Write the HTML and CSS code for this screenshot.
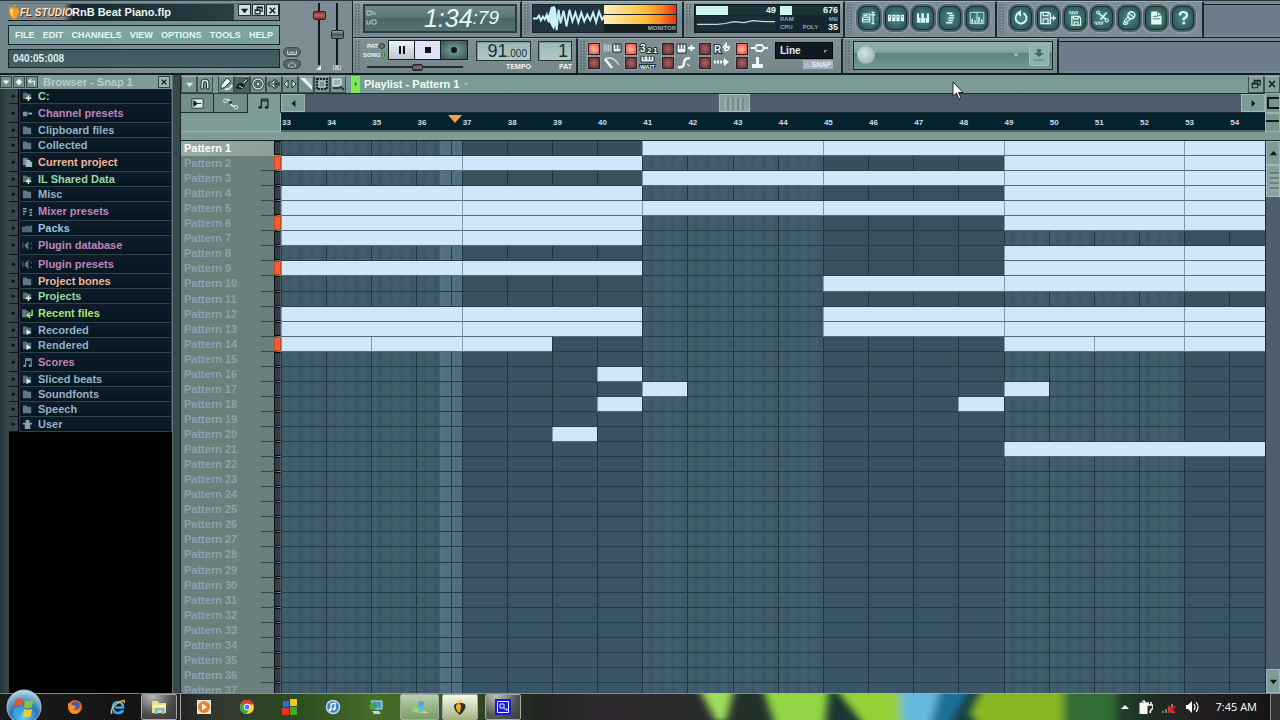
FILE: index.html
```html
<!DOCTYPE html>
<html lang="en">
<head>
<meta charset="utf-8">
<title>FL Studio - RnB Beat Piano.flp</title>
<link rel="stylesheet" href="styles.css">
</head>
<body>
<svg class="sprite" aria-hidden="true">
  <symbol id="fruit" viewBox="0 0 12 18"><path d="M1 6Q3 3 6 5Q10 4 11 8Q11 13 6 17Q1 13 1 6Z" fill="#ff9a1e"/><path d="M2 7Q3 5 5 6Q4 10 5 14Q2 11 2 7Z" fill="#ffe070"/><path d="M5 5Q5 1 9 1Q8 3 6 5Z" fill="#6fc23b"/></symbol>
  <symbol id="down" viewBox="0 0 10 10"><path d="M1 3h8L5 8Z" fill="currentColor"/></symbol>
  <symbol id="up" viewBox="0 0 10 10"><path d="M1 7h8L5 2Z" fill="currentColor"/></symbol>
  <symbol id="left" viewBox="0 0 10 10"><path d="M7 1v8L3 5Z" fill="currentColor"/></symbol>
  <symbol id="right" viewBox="0 0 10 10"><path d="M3 1v8L7 5Z" fill="currentColor"/></symbol>
  <symbol id="marker" viewBox="0 0 14 8"><path d="M0 0h14L7 8Z" fill="currentColor"/></symbol>
  <symbol id="restore" viewBox="0 0 12 12"><path d="M4 4V1.500h7V7H8M1.500 5H8v5.500H1.500ZM1.500 6H8M4 2.500h7" fill="none" stroke="currentColor" stroke-width="1.400"/></symbol>
  <symbol id="close" viewBox="0 0 10 10"><path d="M2 2l6 6M8 2L2 8" stroke="currentColor" stroke-width="1.600"/></symbol>
  <symbol id="folder" viewBox="0 0 12 12"><path d="M1 3V1.500h4L6 3h4v7H1Z" fill="#607783"/></symbol>
  <symbol id="folderplus" viewBox="0 0 12 12"><path d="M1 3V1.500h4L6 3h4v6H1Z" fill="#566d72"/><path d="M7 5v6M4 8h6" stroke="#d8f2e2" stroke-width="1.600"/></symbol>
  <symbol id="folderplay" viewBox="0 0 12 12"><path d="M1 3V1.500h4L6 3h4v7H1Z" fill="#566d77"/><path d="M5 5l5 3-5 3Z" fill="#e6f4fa"/></symbol>
  <symbol id="folderrecent" viewBox="0 0 12 12"><path d="M0 3V1.500h4L5 3h2v7H0Z" fill="#607783"/><path d="M11 2v6H7M9 5L6 8l3 3" fill="none" stroke="#b5ec6b" stroke-width="1.500"/></symbol>
  <symbol id="channel" viewBox="0 0 12 12"><path d="M1 4h5v5H1Z" fill="#7b8f9c"/><path d="M7 5h4v2H7Z" fill="#a7b8c2"/></symbol>
  <symbol id="pages" viewBox="0 0 12 12"><path d="M1 1h5v8H1Z" fill="#708692"/><path d="M4 3h4l3 3v5H4Z" fill="#a3b7c0"/></symbol>
  <symbol id="mixer" viewBox="0 0 12 12"><path d="M1 3h4M1 6h4M1 9h2M8 4h3M8 7h3M8 10h3" stroke="#8fa2ad" stroke-width="1.600"/></symbol>
  <symbol id="packs" viewBox="0 0 12 12"><path d="M0 4h3l1-1h3v1l4-2v8H0Z" fill="#526874"/></symbol>
  <symbol id="plug" viewBox="0 0 12 12"><path d="M7 1v10L3 7V5Z" fill="#60737d"/><path d="M1 3v6M10 3v2M10 8v2" stroke="#60737d"/></symbol>
  <symbol id="note" viewBox="0 0 12 12"><path d="M4 9V2h6v7M4 3.500h6" fill="none" stroke="currentColor" stroke-width="1.200"/><ellipse cx="3" cy="9.500" rx="1.800" ry="1.400" fill="currentColor"/><ellipse cx="9" cy="9.500" rx="1.800" ry="1.400" fill="currentColor"/></symbol>
  <symbol id="user" viewBox="0 0 12 12"><path d="M4 1h4v3h3v2H9v5H3V6H1V4h3Z" fill="#8ba0a8"/></symbol>
  <symbol id="t-playlist" viewBox="0 0 20 20"><path d="M2 5h9v10H2V9h9M2 12h9M3 7h5" fill="none" stroke="currentColor" stroke-width="1.400"/><path d="M15 3v14M12 6h6M13 3h4M13 17h4" fill="none" stroke="currentColor" stroke-width="1.600"/></symbol>
  <symbol id="t-step" viewBox="0 0 20 20"><path d="M0 6h4v8H0ZM5.300 6h4v8h-4ZM10.600 6h4v8h-4ZM16 6h4v8h-4Z" fill="currentColor"/><path d="M1.500 8.500h1M6.800 8.500h1M12 8.500h1M17.500 8.500h1" stroke="#2d5a5b" stroke-width="2"/></symbol>
  <symbol id="t-piano" viewBox="0 0 20 20"><path d="M2.500 4h2.500v6h2v6H2.500ZM8 10V4h1v0h2v6h1.500v6H7.800v-6ZM15 4h2.500v12h-4.200v-6H15Z" fill="currentColor"/></symbol>
  <symbol id="t-browser" viewBox="0 0 20 20"><path d="M6 4h7M9 7h6M8 10h7M8 13h6M5 16h8" stroke="currentColor" stroke-width="1.900"/></symbol>
  <symbol id="t-mixer" viewBox="0 0 20 20"><path d="M1.500 3h17v14h-17ZM10 3v14" fill="none" stroke="currentColor"/><path d="M4 16v-5M7.500 16v-3M12.500 16V9M16 16v-4" stroke="currentColor" stroke-width="2"/></symbol>
  <symbol id="t-undo" viewBox="0 0 20 20"><path d="M5.500 5A6.800 6.800 0 1 0 13 4" fill="none" stroke="currentColor" stroke-width="2.300"/><path d="M10 0v8L4 4Z" fill="currentColor"/></symbol>
  <symbol id="t-save" viewBox="0 0 20 20"><path d="M1 3h10l2 2v12H1ZM4 3v4h6V3M4 17v-6h6v6M14 10h6M17 7v6" fill="none" stroke="currentColor" stroke-width="1.600"/></symbol>
  <symbol id="t-render" viewBox="0 0 20 20"><path d="M3 5V2h2v3h2V2h2v3h2V2h2v3" fill="none" stroke="currentColor"/><path d="M6 8h9l2 2v9H6ZM8 8v3h6V8M9 19v-4h5v4" fill="none" stroke="currentColor" stroke-width="1.500"/></symbol>
  <symbol id="t-cut" viewBox="0 0 20 20"><path d="M6 4l9 8M16 3L8 12" fill="none" stroke="currentColor" stroke-width="1.900"/><path d="M1 18v-3h2v3h2v-3h2v3h2v-3h2v3" fill="none" stroke="currentColor"/><circle cx="5" cy="3" r="1.800" fill="none" stroke="currentColor" stroke-width="1.300"/><circle cx="16" cy="13" r="2" fill="none" stroke="currentColor" stroke-width="1.400"/></symbol>
  <symbol id="t-mic" viewBox="0 0 20 20"><circle cx="13" cy="6.500" r="4.300" fill="none" stroke="currentColor" stroke-width="1.800"/><path d="M9 8l-5 6 2 2 6-5M4 15q-2 3 1 3t4-2M10 4l6 5" fill="none" stroke="currentColor" stroke-width="1.500"/></symbol>
  <symbol id="t-doc" viewBox="0 0 20 20"><path d="M4 2h8l5 5v11H4Z" fill="currentColor"/><path d="M6 8h6M6 11h9M12 2v5h5" stroke="#37696a" fill="none"/></symbol>
  <symbol id="t-help" viewBox="0 0 20 20"><path d="M6 7q0-4.500 4.500-4.500T15 6q0 3-4 5v2" fill="none" stroke="currentColor" stroke-width="2.800"/><circle cx="11" cy="16.500" r="1.700" fill="currentColor"/></symbol>
  <symbol id="magnet" viewBox="0 0 14 14"><path d="M3 12V6Q3 2 7 2t4 4v6H8.500V6.500Q8.500 4.500 7 4.500T5.500 6.500V12Z" fill="#dcebec" stroke="#1e2d31"/></symbol>
  <symbol id="pencil" viewBox="0 0 14 14"><path d="M2 8L8 1l4 3-6 6-4 2Z" fill="#eef8f8" stroke="#1e2d31"/><path d="M6 12q5 1 7-4" fill="none" stroke="#dfeeee" stroke-width="2"/></symbol>
  <symbol id="brush" viewBox="0 0 14 14"><path d="M8 5l4-4 1 2-4 4" fill="#b4c5c5" stroke="#111"/><path d="M2 8q3-4 7-1 2 3-2 5-4 1-6-1Z" fill="#1b2427"/><path d="M4 9l4 2" stroke="#c8d6d6"/></symbol>
  <symbol id="circle" viewBox="0 0 14 14"><circle cx="7" cy="7" r="5" fill="none" stroke="#1e2d31" stroke-width="3"/><circle cx="7" cy="7" r="5" fill="none" stroke="#dcebec" stroke-width="1.300"/><circle cx="7" cy="7" r="2" fill="#dcebec" stroke="#1e2d31"/></symbol>
  <symbol id="mute" viewBox="0 0 14 14"><path d="M2 5h3l3-3v10L5 9H2Z" fill="#c8d8da" stroke="#1e2d31"/><path d="M10 3v8M12 5v4M1 7h12" stroke="#1e2d31"/></symbol>
  <symbol id="slip" viewBox="0 0 14 14"><path d="M5 3v8L1 7ZM9 3v8l4-4Z" fill="#dcebec" stroke="#1e2d31"/></symbol>
  <symbol id="slice" viewBox="0 0 14 14"><path d="M1 1h5l7 8v4Z" fill="#e4f3f2"/><path d="M6 1h7v8Z" fill="#9db8b3"/></symbol>
  <symbol id="marquee" viewBox="0 0 14 14"><path d="M2 2h10v10H2Z" fill="none" stroke="#17262a" stroke-width="2.200" stroke-dasharray="2 1"/><path d="M4 4h6v6H4Z" fill="none" stroke="#c6d9d9"/></symbol>
  <symbol id="zoomer" viewBox="0 0 14 14"><path d="M2 2h8v7H2Z" fill="#a0b4b5" stroke="#e9f5f5"/><path d="M9 9l4 4M2 11h7" stroke="#18272b" stroke-width="1.700"/></symbol>
  <symbol id="tab-clip" viewBox="0 0 16 14"><path d="M2 2h12v10H2Z" fill="#dceaea" stroke="#26363a"/><path d="M4 4v6l4-3ZM8 7h4" fill="#132227" stroke="#132227"/></symbol>
  <symbol id="tab-auto" viewBox="0 0 18 14"><path d="M3 4q5-3 6 2t6 4" fill="none" stroke="#e0eeee" stroke-width="1.500"/><circle cx="3.500" cy="4" r="2" fill="#78928f" stroke="#e0eeee"/><circle cx="9" cy="6" r="1.600" fill="#223135"/><circle cx="15" cy="11" r="2" fill="#78928f" stroke="#e0eeee"/></symbol>
</svg>

<header class="top">
  <section class="ident">
    <div class="ident-main">
      <div class="titlebar">
        <svg class="fruit"><use href="#fruit"/></svg>
        <span class="brand">FL STUDIO</span>
        <span class="song">RnB Beat Piano.flp</span>
        <div class="winbtns">
          <button aria-label="Minimize"><svg><use href="#down"/></svg></button>
          <button aria-label="Restore"><svg><use href="#restore"/></svg></button>
          <button aria-label="Close"><svg><use href="#close"/></svg></button>
        </div>
      </div>
      <nav class="menu"><button>FILE</button><button>EDIT</button><button>CHANNELS</button><button>VIEW</button><button>OPTIONS</button><button>TOOLS</button><button>HELP</button></nav>
      <div class="hint">040:05:008</div>
    </div>
    <div class="pills">
      <button aria-label="Typing keyboard"><svg viewBox="0 0 18 8"><path d="M4 2v4h10V2M7 5V3M9 5V3M11 5V3" fill="none" stroke="#e3edf0"/></svg></button>
      <button aria-label="Multilink"><svg viewBox="0 0 18 8"><path d="M5 7Q5 2 9 2t4 5M7 7h4" fill="none" stroke="#c9d6da"/></svg></button>
    </div>
    <div class="faders">
      <label><input class="fader red" type="range" min="0" max="100" value="84" aria-label="Main volume"><svg viewBox="0 0 8 5"><path d="M1 5L6 0v5Z" fill="#eef"/></svg></label>
      <label><input class="fader" type="range" min="0" max="100" value="49" aria-label="Main pitch"><svg viewBox="0 0 8 5"><path d="M0 0v5h8V0M3 0v4M5 0v4" fill="none" stroke="#eef"/></svg></label>
    </div>
  </section>

  <div class="panels">
    <div class="prow">
      <section class="panel p-time"><i class="grip"></i>
        <div class="clock"><svg class="clockmode" viewBox="0 0 12 18"><path d="M2 2h4v4H2ZM8 2v4M10 3v3M2 11v4h3v-4M7 11h4v4H7Z" fill="none" stroke="#b7cbcb"/></svg><span class="big">1:34</span><span class="small">:79</span></div>
      </section>
      <section class="panel p-scope"><i class="grip"></i>
        <div class="scope">
          <svg class="wave" viewBox="0 0 72 28" preserveAspectRatio="none"><path d="M0 14h4l2-3 2 5 2-4 2 3 2-5 2 8 2-11 2 15 2-19 2 23 2-21 2 14 3-13 3 16 3-17 3 12 3-9 3 10 3-10 3 9 3-7 3 6 3-8 3 10 3-11 3 8 2-3 1 4" fill="none" stroke="#c7f2f5" stroke-width="2"/><path d="M12 13l4-3 2-8 4-1 2 8v9l-3 8-5-10Z" fill="#c7f2f5"/></svg>
          <div class="meter"><i></i><i></i><span>MONITOR</span></div>
        </div>
      </section>
      <section class="panel p-cpu"><i class="grip"></i>
        <div class="cpu">
          <div class="cpu-l"><div class="gauge"><i class="w32"></i><b>49</b></div><svg viewBox="0 0 80 16" preserveAspectRatio="none"><path d="M1 9h20l8-1 9-2 10 1 9-2 12 1h10" fill="none" stroke="#c3dcdc" stroke-width="1.300"/></svg></div>
          <div class="cpu-r"><div class="gauge"><i class="w12"></i><b>676</b></div><div class="tiny"><span>RAM</span><span>MB</span></div><div class="tiny"><span>CPU</span><span>POLY</span><b>35</b></div></div>
        </div>
      </section>
      <section class="panel p-icons"><i class="grip"></i>
        <button aria-label="Playlist"><svg><use href="#t-playlist"/></svg></button><button aria-label="Step sequencer"><svg><use href="#t-step"/></svg></button><button aria-label="Piano roll"><svg><use href="#t-piano"/></svg></button><button aria-label="Browser"><svg><use href="#t-browser"/></svg></button><button aria-label="Mixer"><svg><use href="#t-mixer"/></svg></button>
      </section>
      <section class="panel p-icons wide"><i class="grip"></i>
        <button aria-label="Undo"><svg><use href="#t-undo"/></svg></button><button aria-label="Save new version"><svg><use href="#t-save"/></svg></button><button aria-label="Render"><svg><use href="#t-render"/></svg></button><button aria-label="Edit sample"><svg><use href="#t-cut"/></svg></button><button aria-label="Record"><svg><use href="#t-mic"/></svg></button><button aria-label="Project info"><svg><use href="#t-doc"/></svg></button><button aria-label="Help"><svg><use href="#t-help"/></svg></button>
      </section>
      <div class="filler"></div>
    </div>
    <div class="prow">
      <section class="panel p-transport"><i class="grip"></i>
        <div class="transport">
          <div class="tline">
            <div class="modes"><label>PAT<input type="radio" name="mode"></label><label>SONG<input type="radio" name="mode" checked></label></div>
            <div class="tbtns">
              <button aria-label="Pause"><svg viewBox="0 0 12 12"><path d="M3 2h2v8H3ZM7 2h2v8H7Z" fill="#0d1518"/></svg></button><button class="on" aria-label="Stop"><svg viewBox="0 0 12 12"><path d="M3 3h6v6H3Z" fill="#0d1518"/></svg></button><button class="rec" aria-label="Record"><svg viewBox="0 0 12 12"><circle cx="6" cy="6" r="3" fill="#0d1518"/></svg></button>
            </div>
          </div>
          <input class="songpos" type="range" min="0" max="100" value="53" aria-label="Song position">
        </div>
        <div class="lcdbox tempo"><output>91<small>.000</small></output><span>TEMPO</span></div>
        <div class="lcdbox pat"><output>1</output><span>PAT</span></div>
      </section>
      <section class="panel p-toggles"><i class="grip"></i>
        <div class="toggles">
          <label><input type="checkbox" checked aria-label="Typing keyboard to piano"><svg viewBox="0 0 20 13"><path d="M1 2h9v8H1Z" fill="#93a0a6"/><path d="M2 4h7M2 6h7M2 8h7" stroke="#e8f3f5" stroke-dasharray="1 1"/><path d="M11 2h8v8h-8ZM14 2v5M17 2v5" fill="#eef7f8" stroke="#1b2a2e"/></svg></label>
          <label><input type="checkbox" checked aria-label="Countdown"><svg viewBox="0 0 20 13"><text x="1" y="10" class="glyph">3</text><text x="8" y="11" class="glyph s">2</text><text x="14" y="11" class="glyph s">1</text></svg></label>
          <label><input type="checkbox" aria-label="Blend recording"><svg viewBox="0 0 20 13"><path d="M1 2h9v9H1ZM4 2v5M7 2v5" fill="#eef7f8" stroke="#1b2a2e"/><path d="M12 6h7M15.500 3v6" stroke="#eef7f8" stroke-width="2"/></svg></label>
          <label><input type="checkbox" aria-label="Loop recording"><svg viewBox="0 0 20 13"><text x="1" y="11" class="glyph">R</text><path d="M12 9q5-1 4-5M10 6l3-4v3h4M12 6v3" fill="none" stroke="#eef7f8" stroke-width="1.800"/></svg></label>
          <label><input type="checkbox" checked aria-label="Link to last parameter"><svg viewBox="0 0 20 13"><path d="M1 6h4M14 6h4M7 3h5l2 3-2 3H7L5 6Z" fill="none" stroke="#eef7f8" stroke-width="1.800"/></svg></label>
          <label><input type="checkbox" aria-label="Metronome"><svg viewBox="0 0 20 13"><path d="M3 3q8-4 14 6" fill="none" stroke="#c9d7da" stroke-width="1.500"/><path d="M3 3l7 9" stroke="#eef7f8" stroke-width="2.500"/></svg></label>
          <label><input type="checkbox" aria-label="Wait for input"><svg viewBox="0 0 20 13"><path d="M2 0h13v6H2ZM5 0v4M9 0v4M12 0v4" fill="#eef7f8" stroke="#1b2a2e"/><text x="1" y="13" class="glyph xs">WAIT</text></svg></label>
          <label><input type="checkbox" aria-label="Step editing"><svg viewBox="0 0 20 13"><path d="M2 11q6 1 6-4t6-5" fill="none" stroke="#eef7f8" stroke-width="2.500"/><path d="M11 8l3 2" stroke="#eef7f8"/></svg></label>
          <label><input type="checkbox" aria-label="Auto-scroll"><svg viewBox="0 0 20 13"><path d="M1 6h10" stroke="#eef7f8" stroke-width="3" stroke-dasharray="2 1"/><path d="M11 2l5 4-5 4Z" fill="#eef7f8"/></svg></label>
          <label><input type="checkbox" aria-label="MIDI activity"><svg viewBox="0 0 20 13"><path d="M2 8h11v4H2ZM6 1h3v7H6Z" fill="#eef7f8"/></svg></label>
        </div>
        <div class="snap"><select aria-label="Snap"><option>Line</option></select><span>∩ SNAP</span></div>
      </section>
      <section class="panel p-news"><i class="grip"></i>
        <div class="news"><i class="bulb"></i><svg class="arr"><use href="#down"/></svg><button aria-label="Download"><svg viewBox="0 0 14 14"><path d="M5 1h4v4h3L7 9 2 5h3Z" fill="#456b6b"/><path d="M2 12h10" stroke="#5d8483"/></svg></button></div>
      </section>
      <div class="filler"></div>
    </div>
  </div>
</header>

<main class="work">
  <aside class="browser">
    <div class="bhead">
      <button aria-label="Options"><svg><use href="#down"/></svg></button>
      <button aria-label="Collapse"><svg viewBox="0 0 10 10"><path d="M5 1l4 4-4 4-4-4Z" fill="#f2fbfa"/></svg></button>
      <button aria-label="Refresh"><svg viewBox="0 0 10 10"><path d="M1 4h7v5M4 1L1 4l3 3" fill="none" stroke="#f2fbfa" stroke-width="1.400"/></svg></button>
      <h2>Browser - Snap 1</h2>
      <button class="x" aria-label="Close browser"><svg><use href="#close"/></svg></button>
    </div>
    <ul class="tree" id="tree"></ul>
  </aside>

  <section class="playlist">
    <div class="phead">
      <div class="tools"><button aria-label="Menu"><svg class="tri"><use href="#down"/></svg></button><button aria-label="Snap"><svg><use href="#magnet"/></svg></button></div>
      <div class="tools"><button aria-label="Draw"><svg><use href="#pencil"/></svg></button><button class="down" aria-label="Paint"><svg><use href="#brush"/></svg></button><button aria-label="Delete"><svg><use href="#circle"/></svg></button><button aria-label="Mute"><svg><use href="#mute"/></svg></button><button aria-label="Slip"><svg><use href="#slip"/></svg></button><button aria-label="Slice"><svg><use href="#slice"/></svg></button><button aria-label="Select"><svg><use href="#marquee"/></svg></button><button aria-label="Zoom"><svg><use href="#zoomer"/></svg></button></div>
      <i class="flag"><svg><use href="#right"/></svg></i>
      <h1>Playlist - Pattern 1</h1><svg class="caret"><use href="#down"/></svg>
      <div class="tools end"><button aria-label="Restore playlist"><svg><use href="#restore"/></svg></button><button aria-label="Close playlist"><svg><use href="#close"/></svg></button></div>
    </div>
    <div class="pgrid">
      <div class="tabs"><button aria-label="Clips"><svg><use href="#tab-clip"/></svg></button><button aria-label="Automation"><svg><use href="#tab-auto"/></svg></button><button class="sel" aria-label="Patterns"><svg><use href="#note"/></svg></button></div>
      <div class="hscroll"><button aria-label="Scroll left"><svg><use href="#left"/></svg></button><div class="track"><i class="thumb"></i></div><button aria-label="Scroll right"><svg><use href="#right"/></svg></button></div>
      <button class="corner box" aria-label="Zoom out"></button>
      <div class="under-tabs"></div>
      <div class="ruler bars" id="ruler"></div>
      <button class="corner line" aria-label="Zoom in"></button>
      <div class="strip"></div>
      <div class="names"><ol id="names"></ol></div>
      <div class="lanes"><div class="stack"><div class="layer bars" id="cols"></div><div class="layer bars"><i class="playzone"></i></div><div class="layer rows" id="rows"></div></div></div>
      <div class="vscroll"><button aria-label="Scroll up"><svg><use href="#up"/></svg></button><i class="vthumb"></i><button class="bottom" aria-label="Scroll down"><svg><use href="#down"/></svg></button></div>
    </div>
  </section>
</main>

<footer class="taskbar">
  <svg class="wall" viewBox="0 0 1280 27" preserveAspectRatio="none" aria-hidden="true">
    <defs><filter id="soft"><feGaussianBlur stdDeviation="4 2"/></filter>
    <linearGradient id="wl"><stop offset="0" stop-color="#171b1a"/><stop offset=".12" stop-color="#161216"/><stop offset=".17" stop-color="#33382f"/><stop offset=".23" stop-color="#2c4a22"/><stop offset=".29" stop-color="#456d28"/><stop offset=".34" stop-color="#3c5d25"/><stop offset=".42" stop-color="#20251f"/><stop offset=".47" stop-color="#302a30"/><stop offset=".53" stop-color="#2b2b2c"/><stop offset=".62" stop-color="#1e3428"/><stop offset=".74" stop-color="#143b46"/><stop offset=".84" stop-color="#2c5a33"/><stop offset=".9" stop-color="#1d2c21"/><stop offset=".94" stop-color="#221e22"/><stop offset="1" stop-color="#121315"/></linearGradient></defs>
    <rect width="1280" height="27" fill="url(#wl)"/>
    <g filter="url(#soft)"><path d="M699-4h35l-8 32h-10Z" fill="#9ede5c"/><path d="M763-4h66l-4 36h-50Z" fill="#92d545"/><path d="M836-4h66v36h-38Z" fill="#96d038"/><path d="M900-4h42l-12 36h-28Z" fill="#66b9dd"/><path d="M940-4h30l-20 36h-20Z" fill="#1b6f94"/><path d="M982-4h82v36h-86l-8-12Z" fill="#88b624"/><path d="M1066-4h50v36h-50Z" fill="#336d35"/></g>
    <path d="M0 .500h1280" stroke="#a9b3b0" opacity=".7"/>
  </svg>
  <div class="apps">
    <button class="orb" aria-label="Start"><svg viewBox="0 0 36 36"><defs><radialGradient id="og" cx=".5" cy=".8" r=".8"><stop offset="0" stop-color="#5fd6f5"/><stop offset=".5" stop-color="#2a78b5"/><stop offset="1" stop-color="#bfe0ef"/></radialGradient></defs><circle cx="18" cy="18" r="17" fill="url(#og)" stroke="#9fc3d6"/><path d="M9 11q4-3 8-1l-1 7q-4-2-8 1Z" fill="#ee5527"/><path d="M19 11q4 2 8 0l-1 7q-4 2-8 0Z" fill="#8cc63f"/><path d="M8 20q4-3 8-1l-1 7q-4-2-8 1Z" fill="#3ba0e6"/><path d="M18 20q4 2 8 0l-1 7q-4 2-8 0Z" fill="#fcc92c"/></svg></button>
    <button aria-label="Firefox"><svg viewBox="0 0 16 16"><circle cx="8" cy="8" r="7" fill="#e8641b"/><circle cx="8.500" cy="6.500" r="4" fill="#3b5fa8"/><path d="M1 4q2 0 4 2 3 0 4 2-1 3-4 2 3 3 8-1 0 6-6 6T1 4Z" fill="#f98d22"/></svg></button>
    <button aria-label="Internet Explorer"><svg viewBox="0 0 16 16"><path d="M13 11q-1 3-5 3-5 0-5-5.500T8 3q5 0 5 5.500H5" fill="none" stroke="#3fa5ea" stroke-width="2.500"/><path d="M2 15Q-1 10 8 4q8-5 6 0" fill="none" stroke="#f2c73a" stroke-width="1.300"/></svg></button>
    <button class="open" aria-label="Explorer"><svg viewBox="0 0 16 16"><path d="M1 2h6l1 2h7v10H1Z" fill="#f6dd7f"/><path d="M2 6h12v3H2Z" fill="#fff4bf"/><path d="M5 15v-5h7v5" fill="none" stroke="#6cbbe0" stroke-width="2.500"/></svg></button>
    <i class="sep"></i>
    <button class="first" aria-label="Media Player"><svg viewBox="0 0 16 16"><path d="M1 1h14v14H1Z" fill="#dbe7ee"/><circle cx="8" cy="8" r="6" fill="#f4811f"/><path d="M6 4.500v7l5-3.500Z" fill="#fff"/></svg></button>
    <button aria-label="Chrome"><svg viewBox="0 0 16 16"><circle cx="8" cy="8" r="7" fill="#ffd23d"/><path d="M8 8L2 4.500A7 7 0 0 1 14.500 5.500H8Z" fill="#e23a2c"/><path d="M8 8L2 4.500A7 7 0 0 0 7.500 15L11 9Z" fill="#3aa755"/><circle cx="8" cy="8" r="3" fill="#4285f4" stroke="#fff"/></svg></button>
    <button aria-label="Windows Live"><svg viewBox="0 0 16 16"><path d="M1 2h6v6H1Z" fill="#2d6fe0"/><path d="M8 0h7v7H8Z" fill="#f4c51f"/><path d="M0 9h7v7H0Z" fill="#e33524"/><path d="M8 8h7v8H8Z" fill="#49a62b"/></svg></button>
    <button aria-label="iTunes"><svg viewBox="0 0 16 16"><circle cx="8" cy="8" r="6.500" fill="#3b7fc0" stroke="#b9daf1" stroke-width="1.500"/><path d="M6 11V5l4-1v6" fill="none" stroke="#fff" stroke-width="1.300"/><circle cx="5" cy="11" r="1.400" fill="#fff"/><circle cx="9" cy="10" r="1.400" fill="#fff"/></svg></button>
    <button aria-label="Network"><svg viewBox="0 0 16 16"><path d="M3 2h11v8H6Z" fill="#3f9cc9" stroke="#bfe1ee"/><circle cx="5" cy="7" r="3.500" fill="#4aa04c"/><path d="M4 12h7l2 3H6Z" fill="#b7d9ea"/></svg></button>
    <button class="open g" aria-label="Messenger"><svg viewBox="0 0 16 16"><circle cx="9" cy="5" r="3" fill="#57a9d9"/><path d="M3 14q1-7 6-6t6 6Z" fill="#5fbce2"/><path d="M0 13q1-6 5-4l4 5Z" fill="#9bd364"/><path d="M9 14q3-4 7 0Z" fill="#f2d045"/></svg></button>
    <button class="open w" aria-label="FL Studio"><svg viewBox="0 0 16 16"><path d="M2 6q4-4 11-1 2 5-5 11Q2 12 2 6Z" fill="#24302a"/><path d="M4 6q3-2 5 0 0 6-2 8-4-4-3-8Z" fill="#ffa726"/><path d="M5 4q1-4 5-3Q9 4 6 5Z" fill="#ffd44d"/></svg></button>
    <button class="open" aria-label="Recorder"><svg viewBox="0 0 16 16"><path d="M0 0h16v16H0Z" fill="#1718d8"/><path d="M2.500 2.500h11v11h-11ZM5 5h4v4H5ZM9 10h3v2" fill="none" stroke="#e8ecff"/></svg></button>
  </div>
  <div class="tray">
    <svg viewBox="0 0 10 10" class="s"><path d="M1 7h8L5 3Z" fill="#fff"/></svg>
    <svg viewBox="0 0 14 14"><path d="M1 3h7v11H1ZM3 1h3v2" fill="#f6f6f6" stroke="#f6f6f6"/><path d="M9 2v3M12 2v3M8 5h6v3q-3 2-3 5" fill="none" stroke="#fff" stroke-width="1.500"/></svg>
    <svg viewBox="0 0 14 14"><path d="M1 13v-2M4 13V9M7 13V7M10 13V4" stroke="#999" stroke-width="1.500"/><path d="M6 6l7 7M13 6l-7 7" stroke="#e8141a" stroke-width="2.200"/></svg>
    <svg viewBox="0 0 14 14"><path d="M1 5h2l4-4v12L3 9H1Z" fill="#fff"/><path d="M9 4q2 3 0 6M11 2q4 5 0 10" fill="none" stroke="#fff" stroke-width="1.200"/></svg>
    <time>7:45 AM</time>
    <button class="peek" aria-label="Show desktop"></button>
  </div>
</footer>

<svg class="cursor" viewBox="0 0 12 19" aria-hidden="true"><path d="M1 1v14l3.500-3 2.500 6 2-1-2.500-5.500H11Z" fill="#fff" stroke="#222"/></svg>
<script src="app.js"></script>
</body>
</html>
```
FILE: styles.css
```css
* { box-sizing: border-box; }
:root { --edge: #16242a; --teal: #7d9c98; --steel: #7b8b91; }
body { margin: 0; height: 100vh; display: flex; flex-direction: column; overflow: hidden; background: #000; font-family: "Liberation Sans", Arial, sans-serif; font-size: 11px; font-weight: bold; color: #dfeef0; }
button, input, select { margin: 0; padding: 0; border: 0; font: inherit; color: inherit; background: none; }
button { display: flex; align-items: center; justify-content: center; flex: none; }
h1, h2, ul, ol { margin: 0; padding: 0; list-style: none; font-size: 11px; }
svg { display: block; flex: none; }
.sprite { position: absolute; width: 0; height: 0; }
i { font-style: normal; }

/* top bar */
.top { display: flex; flex: none; height: 75px; background: linear-gradient(#8c9ca1, #74848a 30%, #7f9095 60%, #75868b); border-bottom: 2px solid #131e24; border-top: 1px solid #2a3a40; }
.ident { display: flex; flex: none; width: 352px; padding: 2px 0 0 8px; background: linear-gradient(90deg, #72858a, #7d9296 60%, #7d8b93); }
.ident-main { width: 272px; display: flex; flex-direction: column; gap: 4px; }
.titlebar { display: flex; align-items: center; height: 18px; background: linear-gradient(90deg, #76898e 56px, #14272e 64px, #30474c); border: 1px solid var(--edge); border-left: 0; border-top-color: #5f7278; }
.fruit { width: 12px; height: 18px; }
.brand { width: 52px; flex: none; font-style: italic; font-size: 10px; color: #fbe3bd; text-shadow: 1px 1px 0 #5b2d12; white-space: nowrap; }
.song { flex: 1; color: #e9f6f8; white-space: nowrap; }
.winbtns { display: flex; align-self: stretch; padding-left: 4px; background: #74868b; gap: 1px; align-items: flex-start; }
.winbtns button { width: 13px; height: 12px; background: #d5dee8; border: 1px solid #223136; color: #101a1e; }
.winbtns svg { width: 9px; height: 9px; }
.menu { display: flex; align-items: center; justify-content: space-between; height: 20px; padding: 0 6px; border: 1px solid var(--edge); background: linear-gradient(#7fa5a4, #7aa09f); font-size: 9px; color: #e4f8f7; }
.hint { height: 19px; line-height: 18px; padding: 0 4px; border: 1px solid var(--edge); background: linear-gradient(#42595e, #456166); color: #d9eeee; font-size: 10px; }
.pills { display: flex; flex-direction: column; justify-content: flex-end; gap: 2px; padding: 0 0 4px 3px; }
.pills button { width: 18px; height: 10px; border-radius: 5px; background: #59676f; border: 1px solid #3c494f; }
.pills svg { width: 16px; height: 7px; }
.faders { display: flex; margin-left: 10px; gap: 2px; }
.faders label { width: 16px; display: flex; flex-direction: column; align-items: center; }
.faders svg { width: 8px; height: 5px; }
.fader { appearance: none; writing-mode: vertical-lr; direction: rtl; width: 14px; height: 62px; background: linear-gradient(90deg, transparent 6px, #10181b 6px, #10181b 8px, transparent 8px); }
.fader::-webkit-slider-thumb { appearance: none; width: 13px; height: 9px; border: 1px solid #20282c; border-radius: 2px; background: linear-gradient(#a0a8ae, #4a545b 50%, #7a858c); }
.fader.red::-webkit-slider-thumb { background: linear-gradient(#7d3b3d, #d9555a 50%, #6e3436); }

.panels { flex: 1; min-width: 0; display: flex; flex-direction: column; border-left: 1px solid var(--edge); }
.prow { display: flex; flex: 1; min-height: 0; }
.prow + .prow { border-top: 1px solid var(--edge); }
.panel { display: flex; flex: none; align-items: center; border-right: 2px solid #1b292e; border-top: 1px solid #a2b0b4; }
.grip { align-self: stretch; width: 6px; margin: 2px 2px; background: radial-gradient(circle at 1px 1px, #65757b 1px, transparent 1px) 0 0 / 3px 3px; flex: none; }
.filler { flex: 1; background: repeating-linear-gradient(#6d7c8a 0, #6d7c8a 6px, #738290 7px, #6a7987 8px); border-top: 3px solid #78888e; box-shadow: inset 0 1px #10191d; border-bottom: 2px solid #78888e; }
.p-time { width: 169px; }
.clock { display: flex; align-items: center; justify-content: flex-end; width: 154px; height: 29px; margin-bottom: 2px; padding-right: 16px; border: 2px solid #2b3d41; background: linear-gradient(#6f8888, #5a7475 45%, #4a6668 50%, #57706f); color: #e5fafa; font-style: italic; font-weight: normal; }
.clockmode { width: 12px; height: 20px; margin-right: auto; }
.big { font-size: 25px; line-height: 28px; }
.small { font-size: 19px; line-height: 28px; }
.p-scope { width: 162px; }
.scope { display: flex; width: 145px; height: 29px; margin-bottom: 2px; border: 1px solid #1a262b; background: #233440; }
.wave { width: 71px; height: 27px; }
.meter { flex: 1; display: flex; flex-direction: column; gap: 1px; background: #181d1d; }
.meter i { height: 9px; background: linear-gradient(90deg, #fff1b8, #ffc23c 55%, #fd8a20 78%, #e93314); }
.meter span { font-size: 6px; line-height: 7px; text-align: right; color: #9fadad; }
.p-cpu { width: 161px; }
.cpu { display: flex; gap: 4px; width: 146px; height: 29px; margin-bottom: 2px; padding: 1px; border: 1px solid #0e191d; background: #15262e; }
.cpu-l { width: 80px; display: flex; flex-direction: column; gap: 1px; }
.cpu-r { flex: 1; display: flex; flex-direction: column; }
.cpu-l svg { width: 80px; height: 15px; background: #1c2e36; }
.gauge { display: flex; justify-content: space-between; align-items: center; height: 10px; background: #1e323a; }
.gauge i { height: 9px; background: #cff5f7; }
.w32 { width: 32px; } .w12 { width: 12px; }
.gauge b, .tiny b { font-size: 9px; line-height: 9px; color: #e0f8f8; }
.tiny { display: flex; justify-content: space-between; font-size: 6px; line-height: 8px; color: #8fa5a7; }
.p-icons { width: 152px; gap: 1px; background: #7f8b96; }
.p-icons.wide { width: 207px; }
.p-icons button { width: 26px; height: 28px; border-radius: 9px; border: 2px solid #54646c; box-shadow: inset 0 0 0 1px #18302f, 0 0 0 1px #96a3ab; background: radial-gradient(#4f8d8b, #244c4d 90%); color: #dff8f6; margin-bottom: 2px; }
.p-icons svg { width: 16px; height: 16px; }

.p-transport { width: 225px; }
.transport { width: 106px; }
.tline { display: flex; gap: 3px; }
.modes { width: 22px; padding-top: 1px; font-size: 6px; color: #e9f3f4; }
.modes label { display: flex; justify-content: flex-end; align-items: center; gap: 1px; height: 9px; }
.modes input { appearance: none; width: 6px; height: 6px; border-radius: 3px; border: 1px solid #27353a; background: #69787d; }
.modes input:checked { background: #43ef44; border-color: #2d7e33; }
.tbtns { display: flex; border: 1px solid #172227; }
.tbtns button { width: 26px; height: 18px; background: linear-gradient(#eef2f5, #bcc8cf); border-right: 1px solid #172227; }
.tbtns button.on { background: #dfe3f6; }
.tbtns button.rec { background: radial-gradient(#78a3a0, #34514f); border-right: 0; }
.tbtns svg { width: 12px; height: 12px; }
.songpos { appearance: none; display: block; width: 96px; height: 8px; margin: 3px 0 0 4px; background: linear-gradient(transparent 3px, #202c31 3px, #202c31 5px, transparent 5px); }
.songpos::-webkit-slider-thumb { appearance: none; width: 11px; height: 7px; background: linear-gradient(#3c464b, #a06a6a 50%, #2e363a); border: 1px solid #1d2528; border-radius: 2px; }
.lcdbox { display: flex; flex-direction: column; align-items: flex-end; gap: 2px; margin-left: 7px; font-size: 7px; line-height: 8px; color: #edf3f8; }
.lcdbox output { display: block; height: 20px; line-height: 18px; text-align: right; padding-right: 3px; border: 1px solid #253438; background: linear-gradient(#9cb9b6, #b0c9c5); box-shadow: inset 1px 1px #7b9694; color: #1c2f32; font-size: 18px; font-weight: normal; }
.lcdbox small { font-size: 10px; }
.tempo output { width: 55px; }
.pat output { width: 34px; }
.p-toggles { width: 265px; }
.toggles { display: grid; grid-template-columns: repeat(5, 37px); grid-auto-rows: 14px; }
.toggles label { display: flex; align-items: center; gap: 2px; }
.toggles input { appearance: none; flex: none; width: 12px; height: 12px; border: 1px solid #321d20; background: radial-gradient(#a05b5b 15%, #5d3033); box-shadow: 0 0 0 1px #8e999d; }
.toggles input:checked { background: radial-gradient(#ffb09c 15%, #e9402f); }
.toggles svg { width: 20px; height: 13px; }
.glyph { fill: #f1fafa; font-size: 10px; font-weight: bold; stroke: #1b2a2e; stroke-width: 2px; paint-order: stroke; }
.glyph.s { font-size: 8px; }
.glyph.xs { font-size: 6px; }
.snap { display: flex; flex-direction: column; align-items: flex-end; gap: 1px; margin-left: 2px; }
.snap select { appearance: none; width: 58px; height: 17px; padding: 0 4px; background: linear-gradient(135deg, #7b8d93 50%, transparent 50%) 48px 7px / 4px 4px no-repeat, #0f1b22; border: 1px solid #05090b; color: #e3eef0; font-size: 10px; }
.snap span { background: #a5b1c0; color: #e8eef6; font-size: 7px; line-height: 9px; padding: 0 2px; }
.p-news { width: 216px; }
.news { display: flex; align-items: center; width: 200px; height: 29px; margin-bottom: 1px; padding: 0 3px; border: 1px solid #17262a; background: linear-gradient(#90b0af, #82a4a3 38%, #5e8381 42%, #729996); gap: 10px; }
.bulb { width: 18px; height: 18px; border-radius: 9px; margin-right: auto; background: radial-gradient(circle at 40% 40%, #d4e6e5, #84a4a2); }
.arr { width: 6px; height: 6px; color: #a9c5c3; }
.news button { width: 20px; height: 22px; border-radius: 3px; background: #8eb0ae; border: 1px solid #a2c0be; }
.news button svg { width: 14px; height: 14px; }

/* workspace */
.work { display: flex; flex: 1; min-height: 0; background: linear-gradient(90deg, #26373a, #38494b 9px); }
.browser { display: flex; flex-direction: column; width: 173px; flex: none; border-right: 1px solid #5f7773; }
.bhead { display: flex; align-items: center; height: 14px; background: var(--teal); gap: 1px; padding-right: 2px; }
.bhead button { width: 12px; height: 12px; border: 1px solid #33474a; background: #738f8c; color: #f2fbfa; }
.bhead svg { width: 8px; height: 8px; }
.bhead h2 { flex: 1; padding-left: 4px; color: #b7cdce; white-space: nowrap; }
.bhead .x { color: #10191b; background: #9db5b1; }
.tree { flex: 1; margin-left: 9px; background: #000; }
.tree button { flex: 1; min-width: 0; height: 15px; padding-left: 2px; justify-content: flex-start; gap: 5px; background: linear-gradient(#111a2b, #04181e); border-left: 1px solid #2c3d46; border-right: 1px solid #2f4247; border-bottom: 1px solid #2f4247; }
.tree li { display: flex; }
.tree li::before { content: "▸"; flex: none; width: 9px; margin-right: 1px; font-size: 7px; line-height: 14px; text-align: center; color: #0b1013; background: #36454e; border-bottom: 1px solid #111b1f; }
.tree .tall button { height: 19px; }
.tree .tall::before { line-height: 18px; }
.tree svg { width: 11px; height: 11px; color: #8596a2; }
.blue { color: #92b3c6; } .pink { color: #c083ba; } .green { color: #96dba8; } .lime { color: #aae56c; } .peach { color: #f2b59a; } .sky { color: #9dc1e6; }

.playlist { flex: 1; min-width: 0; display: flex; flex-direction: column; margin-left: 7px; border-left: 1px solid #15242a; }
.phead { display: flex; align-items: center; height: 18px; flex: none; background: linear-gradient(#7b9994, #7c9c98); }
.tools { display: flex; margin-right: 5px; }
.tools button { width: 16px; height: 17px; border: 1px solid #3d5053; border-top-color: #9db2ae; background: #76928e; color: #d7e7e5; }
.tools button.down { background: #4d6260; }
.tools svg { width: 14px; height: 14px; }
.tools .tri { width: 9px; height: 9px; }
.tools.end { margin: 0 0 0 auto; }
.tools.end button { background: #83a09c; color: #17262a; }
.tools.end svg { width: 10px; height: 10px; }
.flag { width: 9px; height: 17px; background: #7bea57; display: flex; align-items: center; justify-content: center; color: #2c7a28; margin-right: 4px; }
.flag svg { width: 6px; height: 6px; }
h1 { color: #f1fafa; white-space: nowrap; }
.caret { width: 6px; height: 6px; margin-left: 4px; color: #a5bdbb; }
.pgrid { flex: 1; min-height: 0; display: grid; grid-template-columns: 100px minmax(0, 1fr) 15px; grid-template-rows: 20px 19px 9px minmax(0, 1fr); background: var(--teal); }
.tabs { display: flex; border-top: 1px solid #2a3c40; }
.tabs button { flex: 1; border-right: 1px solid #1f3034; border-bottom: 1px solid #1f3034; background: #738d8a; }
.tabs .sel { border-bottom: 0; background: var(--teal); color: #1a282c; }
.tabs svg { width: 17px; height: 13px; }
.hscroll { display: flex; background: #505d6d; border-top: 1px solid #1d2c34; border-bottom: 1px solid #1d2c34; }
.hscroll button { width: 24px; background: #7d9c98; border: 1px solid #9db8b2; border-right-color: #9fb2ae; color: #0c1518; }
.hscroll svg { width: 9px; height: 9px; }
.track { flex: 1; display: flex; justify-content: center; padding-right: 78px; }
.thumb { width: 31px; border: 1px solid #a8bfbb; background: repeating-linear-gradient(90deg, #93aaa8 0, #93aaa8 3px, #73898b 3px, #73898b 5px) 4px 3px / 21px 12px no-repeat, #87a09d; }
.corner { border: 1px solid #9db2ae; background: #78948f; }
.corner.box { background: linear-gradient(#78948f, #78948f) 3px 5px / 12px 8px no-repeat, linear-gradient(#0f1a1d, #0f1a1d) 1px 3px / 14px 12px no-repeat, #78948f; }
.corner.line { background: linear-gradient(#78948f 6px, #0f1a1d 6px, #0f1a1d 8px, #78948f 8px); }
.under-tabs { border-right: 1px solid #a4bbb6; border-bottom: 1px solid #9db5b0; }
.bars { display: grid; grid-template-columns: repeat(21, minmax(0, 100fr)) minmax(0, 79fr); }
.ruler { background: #04232f; border-bottom: 2px solid #50686f; color: #cfdfe4; }
.ruler span { grid-row: 1; font-size: 8px; line-height: 19px; padding-left: 1px; }
.ruler svg { grid-row: 1; grid-column: 4; justify-self: end; width: 14px; height: 8px; margin-top: 2px; color: #f6a04a; }
.strip { grid-column: 1 / -1; border-bottom: 1px solid #17272c; }
.names, .lanes { overflow: hidden; }
.names { background: #6b7f7c; }
.names ol, .stack { height: 557px; display: grid; }
.names ol, .rows { grid-template-rows: repeat(37, minmax(0, 1fr)); }
.names li { display: flex; justify-content: space-between; color: #8ba1b1; padding-left: 3px; line-height: 15px; background: linear-gradient(#33474b, #33474b) right 4px bottom / 16px 1px no-repeat; }
.names li::after { content: ""; width: 5px; margin-bottom: 1px; background: #343d47; border: 1px solid #090e11; border-right-color: #515e64; }
.names li.lit::after { background: #f26032; border-color: #c44622; }
.names li.cur { background: linear-gradient(90deg, #9baca7, #8b9c97); color: #fff; }
.layer { grid-area: 1 / 1; min-width: 0; min-height: 0; }
#cols i { border-left: 1px solid #1c3541; background: linear-gradient(#394f5c, #3a5468); }
#cols i.lt { background: repeating-linear-gradient(90deg, #435e6b 0, #435e6b 5px, #3d576a 7px, #3d576a 9px, #435e6b 11px); }
.playzone { grid-column: 4; justify-self: end; width: 49%; background: linear-gradient(90deg, #8db0c83d 48%, #1e3b4a 48%, #1e3b4a 53%, #8db0c83d 53%); }
.rows { display: grid; }
.row { min-height: 0; border-bottom: 1px solid #233e4a; }
.clip { grid-row: 1; margin-bottom: -1px; background: #d1e5fb; border-left: 1px solid #7e9bab; border-bottom: 1px solid #4f6a78; }

.vscroll { display: flex; flex-direction: column; background: #505d6d; border-left: 1px solid #1d2c34; }
.vscroll button { height: 24px; background: #7d9c98; border: 1px solid #9db8b2; color: #0c1518; }
.vscroll svg { width: 9px; height: 9px; }
.vthumb { height: 32px; border: 1px solid #a8bfbb; background: repeating-linear-gradient(#6a7f81 0, #6a7f81 2px, #93aaa8 2px, #93aaa8 5px) 3px 6px / 9px 20px no-repeat, #87a09d; }
.vscroll .bottom { margin-top: auto; }

/* taskbar */
.taskbar { flex: none; height: 27px; display: grid; grid-template-columns: 1fr auto; background: #1a1a1a; }
.wall { grid-area: 1 / 1 / 2 / 3; width: 100%; height: 27px; }
.apps { grid-area: 1 / 1; display: flex; align-items: center; padding-left: 5px; z-index: 1; }
.apps button { width: 43px; height: 26px; }
.apps svg { width: 16px; height: 16px; }
.apps .orb { width: 48px; justify-content: flex-start; }
.apps .orb svg { width: 38px; height: 36px; }
.apps .open { width: 36px; border: 1px solid #a5aaa8; border-radius: 2px; background: radial-gradient(circle at 30% 0, #e8e8e8cc, #77777788 60%, #55555566); margin-right: 7px; }
.apps .open:has(+ .sep) { margin-left: 2px; margin-right: 3px; }
.apps .sep { width: 1px; height: 26px; background: #a5aaa8; }
.apps .first { margin-left: 1px; }
.apps .g { width: 39px; background: linear-gradient(#d8ead0cc, #8db37fbb); margin: 0 3px; }
.apps .w { background: linear-gradient(#f7fbe8, #a7b584); }
.tray { grid-area: 1 / 2; display: flex; align-items: center; gap: 9px; z-index: 1; font: 11px "Open Sans", "Noto Sans", sans-serif; color: #fff; }
.tray svg { width: 14px; height: 14px; }
.tray .s { width: 10px; height: 10px; }
.tray time { margin: 0 4px 0 8px; white-space: nowrap; }
.peek { width: 10px; height: 27px; border-left: 1px solid #85898a; background: #ffffff22; }
.cursor { position: absolute; left: 952px; top: 81px; width: 12px; height: 19px; }
```
FILE: app.js
```js
const folders = [
  ["C:", "green", "folderplus"], ["Channel presets", "pink", "channel", 1], ["Clipboard files", "blue", "folder"],
  ["Collected", "blue", "folder"], ["Current project", "peach", "pages", 1], ["IL Shared Data", "green", "folderplus"],
  ["Misc", "blue", "folder"], ["Mixer presets", "pink", "mixer", 1], ["Packs", "sky", "packs"],
  ["Plugin database", "pink", "plug", 1], ["Plugin presets", "pink", "plug", 1], ["Project bones", "peach", "folder"],
  ["Projects", "green", "folderplus"], ["Recent files", "lime", "folderrecent", 1], ["Recorded", "blue", "folderplay"],
  ["Rendered", "blue", "folderplay"], ["Scores", "pink", "note", 1], ["Sliced beats", "blue", "folderplay"],
  ["Soundfonts", "blue", "folder"], ["Speech", "blue", "folder"], ["User", "blue", "user"]
];
document.getElementById("tree").innerHTML = folders.map(([name, tone, icon, tall]) =>
  `<li class="${tall ? "tall" : ""}"><button class="${tone}"><svg><use href="#${icon}"/></svg>${name}</button></li>`).join("");

const FIRST = 33, BARS = 22, PATTERNS = 37;
// Each clip is [start bar, end bar], end exclusive.
const a = [33, 37], b = [37, 41], c = [41, 45], d = [45, 49], e = [49, 53], f = [53, 55];
const clips = {
  1: [c, d, e, f], 2: [a, b, e, f], 3: [c, d, e, f], 4: [a, b, e, f], 5: [a, b, c, d, e, f], 6: [a, b, e, f],
  7: [a, b], 8: [e, f], 9: [a, b, e, f], 10: [d, e, f], 12: [a, b, d, e, f], 13: [a, b, d, e, f],
  14: [[33, 35], [35, 37], [37, 39], [49, 51], [51, 53], f], 16: [[40, 41]], 17: [[41, 42], [49, 50]],
  18: [[40, 41], [48, 49]], 20: [[39, 40]], 21: [[49, 55]]
};
const lit = [2, 6, 9, 14];

let ruler = '<svg><use href="#marker"/></svg>', cols = "";
for (let i = 0; i < BARS; i++) {
  ruler += `<span style="grid-column:${i + 1}">${FIRST + i}</span>`;
  cols += `<i class="${i % 8 < 4 ? "lt" : ""}"></i>`;
}
document.getElementById("ruler").innerHTML = ruler;
document.getElementById("cols").innerHTML = cols;

let names = "", rows = "";
for (let p = 1; p <= PATTERNS; p++) {
  names += `<li class="${p === 1 ? "cur" : ""} ${lit.includes(p) ? "lit" : ""}">Pattern ${p}</li>`;
  rows += '<div class="row bars">' + (clips[p] || []).map(([s, t]) =>
    `<div class="clip" style="grid-column:${s - FIRST + 1}/${t - FIRST + 1}"></div>`).join("") + "</div>";
}
document.getElementById("names").innerHTML = names;
document.getElementById("rows").innerHTML = rows;
```
